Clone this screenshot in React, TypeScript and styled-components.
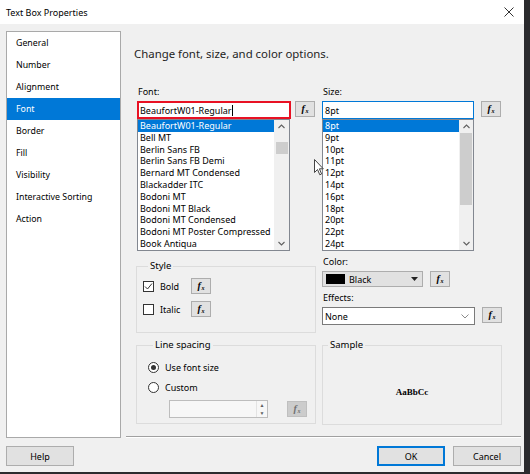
import styled, { createGlobalStyle } from 'styled-components'

const GlobalStyle = createGlobalStyle`
  html,
  body {
    margin: 0;
    padding: 0;
    background: #2b2b2e;
  }
  body {
    font-family: 'Noto Sans', 'Open Sans', sans-serif;
    font-size: 9px;
    color: #000;
  }
  * {
    box-sizing: border-box;
  }
`

const Window = styled.div`
  position: relative;
  width: 524px;
  height: 472px;
  background: #f0f0f0;
  display: flex;
  flex-direction: column;
  overflow: hidden;
`

const TitleBar = styled.div`
  height: 24px;
  background: #fff;
  display: flex;
  align-items: center;
  justify-content: space-between;
  padding: 0 10px 0 6px;
  font-size: 9px;
`

const Body = styled.div`
  flex: 1;
  display: flex;
  flex-direction: column;
  padding: 7px 3px 6px 6px;
`

const Main = styled.div`
  display: flex;
  height: 407px;
`

const Nav = styled.ul`
  width: 115px;
  margin: 0;
  padding: 0;
  list-style: none;
  background: #fff;
  border: 1px solid #a9a9a9;
`

const NavItem = styled.li<{ $active?: boolean }>`
  height: 22px;
  line-height: 23px;
  padding-left: 9px;
  font-size: 8.8px;
  background: ${(p) => (p.$active ? '#0078d7' : 'transparent')};
  color: ${(p) => (p.$active ? '#fff' : '#000')};
`

const Content = styled.div`
  flex: 1;
  display: flex;
  flex-direction: column;
  padding-left: 13px;
`

const Heading = styled.div`
  margin-top: 15px;
  font-size: 11.4px;
  line-height: 16px;
  color: #1e1e1e;
`

const Form = styled.div`
  margin: 24px 0 0 2px;
  display: grid;
  grid-template-columns: 180px 181px;
  column-gap: 5px;
`

const Column = styled.div<{ $top?: number }>`
  display: flex;
  flex-direction: column;
  margin-top: ${(p) => p.$top ?? 0}px;
`

const Label = styled.div<{ $top?: number }>`
  line-height: 12px;
  padding-left: 2px;
  margin-top: ${(p) => p.$top ?? 0}px;
`

const InputRow = styled.div<{ $gap: number; $flush?: boolean }>`
  display: flex;
  align-items: flex-start;
  gap: ${(p) => p.$gap}px;
  margin-top: 3px;
  padding-left: ${(p) => (p.$flush ? 0 : 1)}px;
`

const TextInput = styled.div<{ $width: number; $state?: 'error' | 'focus' }>`
  width: ${(p) => p.$width}px;
  height: 18px;
  background: #fff;
  display: flex;
  align-items: center;
  padding-left: ${(p) => (p.$state === 'error' ? 1 : 2)}px;
  padding-right: 5px;
  border: ${(p) =>
    p.$state === 'error'
      ? '2px solid #e81123'
      : p.$state === 'focus'
        ? '1px solid #0078d7'
        : '1px solid #7a7a7a'};
`

const Caret = styled.span`
  display: inline-block;
  width: 1px;
  height: 11px;
  background: #000;
  margin-left: 1px;
`

const FxButton = styled.div<{ $disabled?: boolean }>`
  width: 20px;
  height: 16px;
  display: flex;
  align-items: center;
  justify-content: center;
  background: ${(p) => (p.$disabled ? '#cccccc' : '#e1e1e1')};
  border: 1px solid ${(p) => (p.$disabled ? '#bfbfbf' : '#adadad')};
  color: ${(p) => (p.$disabled ? '#707070' : '#000')};
  font-family: 'Liberation Serif', serif;
  font-style: italic;
  font-weight: bold;
  font-size: 10px;
  line-height: 1;
  & small {
    font-size: 6px;
    margin-left: 0.5px;
    margin-top: 3px;
  }
`

const ListBox = styled.div<{ $width: number }>`
  width: ${(p) => p.$width}px;
  height: 132px;
  margin-left: 1px;
  background: #fff;
  border: 1px solid #828790;
  display: flex;
`

const ListRows = styled.div`
  flex: 1;
  overflow: hidden;
`

const ListRow = styled.div<{ $selected?: boolean }>`
  height: 11.8px;
  line-height: 12.4px;
  padding-left: 2px;
  white-space: nowrap;
  background: ${(p) => (p.$selected ? '#0078d7' : 'transparent')};
  color: ${(p) => (p.$selected ? '#fff' : '#000')};
`

const ScrollBar = styled.div<{ $width: number }>`
  width: ${(p) => p.$width}px;
  background: #f0f0f0;
  display: flex;
  flex-direction: column;
`

const ScrollArrow = styled.div`
  height: 13px;
  display: flex;
  align-items: center;
  justify-content: center;
`

const ScrollTrack = styled.div`
  flex: 1;
  display: flex;
  flex-direction: column;
  align-items: center;
`

const Thumb = styled.div`
  width: 12px;
  background: #cdcdcd;
`

const GroupBox = styled.fieldset<{ $pad: string; $height?: number }>`
  margin: 0;
  min-width: 0;
  padding: ${(p) => p.$pad};
  border: 1px solid #dcdcdc;
  display: flex;
  flex-direction: column;
  ${(p) => (p.$height ? `height: ${p.$height}px;` : '')}
`

const Legend = styled.legend`
  margin-left: 5px;
  padding: 0 2px;
  line-height: 12px;
  font-size: 9.5px;
`

const CheckRow = styled.div<{ $top?: number }>`
  display: flex;
  align-items: center;
  height: 16px;
  margin-top: ${(p) => p.$top ?? 0}px;
`

const CheckText = styled.span`
  width: 37px;
  padding-left: 6px;
`

const CheckBox = styled.div`
  width: 11px;
  height: 11px;
  background: #fff;
  border: 1px solid #333;
  display: flex;
  align-items: center;
  justify-content: center;
`

const Radio = styled.div<{ $on?: boolean }>`
  width: 11px;
  height: 11px;
  border-radius: 50%;
  background: #fff;
  border: 1px solid #333;
  display: flex;
  align-items: center;
  justify-content: center;
  &::after {
    content: '';
    width: 5px;
    height: 5px;
    border-radius: 50%;
    background: ${(p) => (p.$on ? '#333' : 'transparent')};
  }
`

const RadioRow = styled.div<{ $top?: number }>`
  display: flex;
  align-items: center;
  gap: 6px;
  height: 14px;
  margin-top: ${(p) => p.$top ?? 0}px;
`

const SpinRow = styled.div`
  display: flex;
  align-items: center;
  gap: 19px;
  margin: 6px 0 0 21px;
`

const SpinInput = styled.div`
  width: 99px;
  height: 18px;
  border: 1px solid #bdbdbd;
  background: #f7f7f7;
  display: flex;
  justify-content: flex-end;
`

const SpinButtons = styled.div`
  width: 11px;
  display: flex;
  flex-direction: column;
  justify-content: space-around;
  align-items: center;
  border-left: 1px solid #e3e3e3;
  font-size: 5px;
  color: #606060;
  line-height: 1;
`

const ColorSelect = styled.div`
  width: 101px;
  height: 16px;
  margin-left: 1px;
  background: #e1e1e1;
  border: 1px solid #adadad;
  display: flex;
  align-items: center;
  padding: 0 4px 0 3px;
`

const Swatch = styled.div`
  width: 19px;
  height: 10px;
  background: #000;
  margin-right: 4px;
`

const DropText = styled.span`
  flex: 1;
`

const SampleText = styled.div`
  height: 74px;
  display: flex;
  align-items: center;
  justify-content: center;
  padding-top: 8px;
  font-family: 'Liberation Serif', serif;
  font-weight: bold;
  font-size: 9px;
`

const Separator = styled.div`
  margin-top: auto;
  height: 2px;
  border-top: 1px solid #a0a0a0;
  border-bottom: 1px solid #fff;
  margin-left: -8px;
`

const Footer = styled.div`
  margin-top: 8px;
  display: flex;
  gap: 8px;
`

const Button = styled.div<{ $default?: boolean }>`
  width: 68px;
  height: 20px;
  display: flex;
  align-items: center;
  justify-content: center;
  background: #e1e1e1;
  border: ${(p) => (p.$default ? '2px solid #0078d7' : '1px solid #adadad')};
  &:first-child {
    margin-right: auto;
  }
`

const Cursor = styled.svg`
  position: absolute;
  left: 314px;
  top: 159px;
`

const Fx = ({ disabled }: { disabled?: boolean }) => (
  <FxButton $disabled={disabled}>
    f<small>x</small>
  </FxButton>
)

const Chevron = ({ up }: { up?: boolean }) => (
  <svg width="7" height="5" viewBox="0 0 7 5">
    <path d={up ? 'M0.5 4 L3.5 1 L6.5 4' : 'M0.5 1 L3.5 4 L6.5 1'} fill="none" stroke="#606060" strokeWidth="1.1" />
  </svg>
)

type ListProps = {
  items: string[]
  width: number
  barWidth: number
  thumbTop: number
  thumbHeight: number
}

const List = ({ items, width, barWidth, thumbTop, thumbHeight }: ListProps) => (
  <ListBox $width={width}>
    <ListRows>
      {items.map((item, i) => (
        <ListRow key={item} $selected={i === 0}>
          {item}
        </ListRow>
      ))}
    </ListRows>
    <ScrollBar $width={barWidth}>
      <ScrollArrow>
        <Chevron up />
      </ScrollArrow>
      <ScrollTrack>
        <Thumb style={{ marginTop: thumbTop, height: thumbHeight }} />
      </ScrollTrack>
      <ScrollArrow>
        <Chevron />
      </ScrollArrow>
    </ScrollBar>
  </ListBox>
)

const pages = [
  'General',
  'Number',
  'Alignment',
  'Font',
  'Border',
  'Fill',
  'Visibility',
  'Interactive Sorting',
  'Action',
]

const fonts = [
  'BeaufortW01-Regular',
  'Bell MT',
  'Berlin Sans FB',
  'Berlin Sans FB Demi',
  'Bernard MT Condensed',
  'Blackadder ITC',
  'Bodoni MT',
  'Bodoni MT Black',
  'Bodoni MT Condensed',
  'Bodoni MT Poster Compressed',
  'Book Antiqua',
]

const sizes = ['8pt', '9pt', '10pt', '11pt', '12pt', '14pt', '16pt', '18pt', '20pt', '22pt', '24pt']

const App = () => {
  return (
    <>
      <GlobalStyle />
      <Window>
        <TitleBar>
          <span>Text Box Properties</span>
          <svg width="10" height="10" viewBox="0 0 10 10">
            <path d="M0.5 0.5 L9.5 9.5 M9.5 0.5 L0.5 9.5" stroke="#333" strokeWidth="1" />
          </svg>
        </TitleBar>
        <Body>
          <Main>
            <Nav>
              {pages.map((page) => (
                <NavItem key={page} $active={page === 'Font'}>
                  {page}
                </NavItem>
              ))}
            </Nav>
            <Content>
              <Heading>Change font, size, and color options.</Heading>
              <Form>
                <Column>
                  <Label>Font:</Label>
                  <InputRow $gap={4}>
                    <TextInput $width={154} $state="error">
                      BeaufortW01-Regular
                      <Caret />
                    </TextInput>
                    <Fx />
                  </InputRow>
                  <List items={fonts} width={153} barWidth={15} thumbTop={9} thumbHeight={12} />
                </Column>
                <Column>
                  <Label>Size:</Label>
                  <InputRow $gap={7}>
                    <TextInput $width={152} $state="focus">
                      8pt
                    </TextInput>
                    <Fx />
                  </InputRow>
                  <List items={sizes} width={152} barWidth={14} thumbTop={0} thumbHeight={72} />
                </Column>

                <Column $top={9}>
                  <GroupBox $pad="6px 0 15px 6px">
                    <Legend>Style</Legend>
                    <CheckRow>
                      <CheckBox>
                        <svg width="9" height="9" viewBox="0 0 9 9">
                          <path d="M1 4.5 L3.5 7 L8 1.5" fill="none" stroke="#333" strokeWidth="1" />
                        </svg>
                      </CheckBox>
                      <CheckText>Bold</CheckText>
                      <Fx />
                    </CheckRow>
                    <CheckRow $top={7}>
                      <CheckBox />
                      <CheckText>Italic</CheckText>
                      <Fx />
                    </CheckRow>
                  </GroupBox>
                </Column>
                <Column $top={5}>
                  <Label>Color:</Label>
                  <InputRow $gap={7} $flush>
                    <ColorSelect>
                      <Swatch />
                      <DropText>Black</DropText>
                      <svg width="7" height="4" viewBox="0 0 7 4">
                        <path d="M0 0 L7 0 L3.5 4 Z" fill="#222" />
                      </svg>
                    </ColorSelect>
                    <Fx />
                  </InputRow>
                  <Label $top={5}>Effects:</Label>
                  <InputRow $gap={7}>
                    <TextInput $width={153}>
                      <DropText>None</DropText>
                      <svg width="8" height="5" viewBox="0 0 8 5">
                        <path d="M0.5 0.5 L4 4 L7.5 0.5" fill="none" stroke="#8a8a8a" strokeWidth="1" />
                      </svg>
                    </TextInput>
                    <Fx />
                  </InputRow>
                </Column>

                <Column $top={6}>
                  <GroupBox $pad="9px 0 5px 11px">
                    <Legend>Line spacing</Legend>
                    <RadioRow>
                      <Radio $on />
                      <span>Use font size</span>
                    </RadioRow>
                    <RadioRow $top={6}>
                      <Radio />
                      <span>Custom</span>
                    </RadioRow>
                    <SpinRow>
                      <SpinInput>
                        <SpinButtons>
                          <span>▲</span>
                          <span>▼</span>
                        </SpinButtons>
                      </SpinInput>
                      <Fx disabled />
                    </SpinRow>
                  </GroupBox>
                </Column>
                <Column $top={6}>
                  <GroupBox $pad="0" $height={86} style={{ marginLeft: 1 }}>
                    <Legend>Sample</Legend>
                    <SampleText>AaBbCc</SampleText>
                  </GroupBox>
                </Column>
              </Form>
              <Separator />
            </Content>
          </Main>
          <Footer>
            <Button>Help</Button>
            <Button $default>OK</Button>
            <Button>Cancel</Button>
          </Footer>
        </Body>
        <Cursor width="10" height="17" viewBox="0 0 10 17">
          <path d="M0.5 0.5 L0.5 13.5 L3.5 10.5 L5.8 15.8 L7.6 15 L5.4 9.8 L9.3 9.8 Z" fill="#fff" stroke="#444" strokeWidth="1" />
        </Cursor>
      </Window>
    </>
  )
}

export default App
